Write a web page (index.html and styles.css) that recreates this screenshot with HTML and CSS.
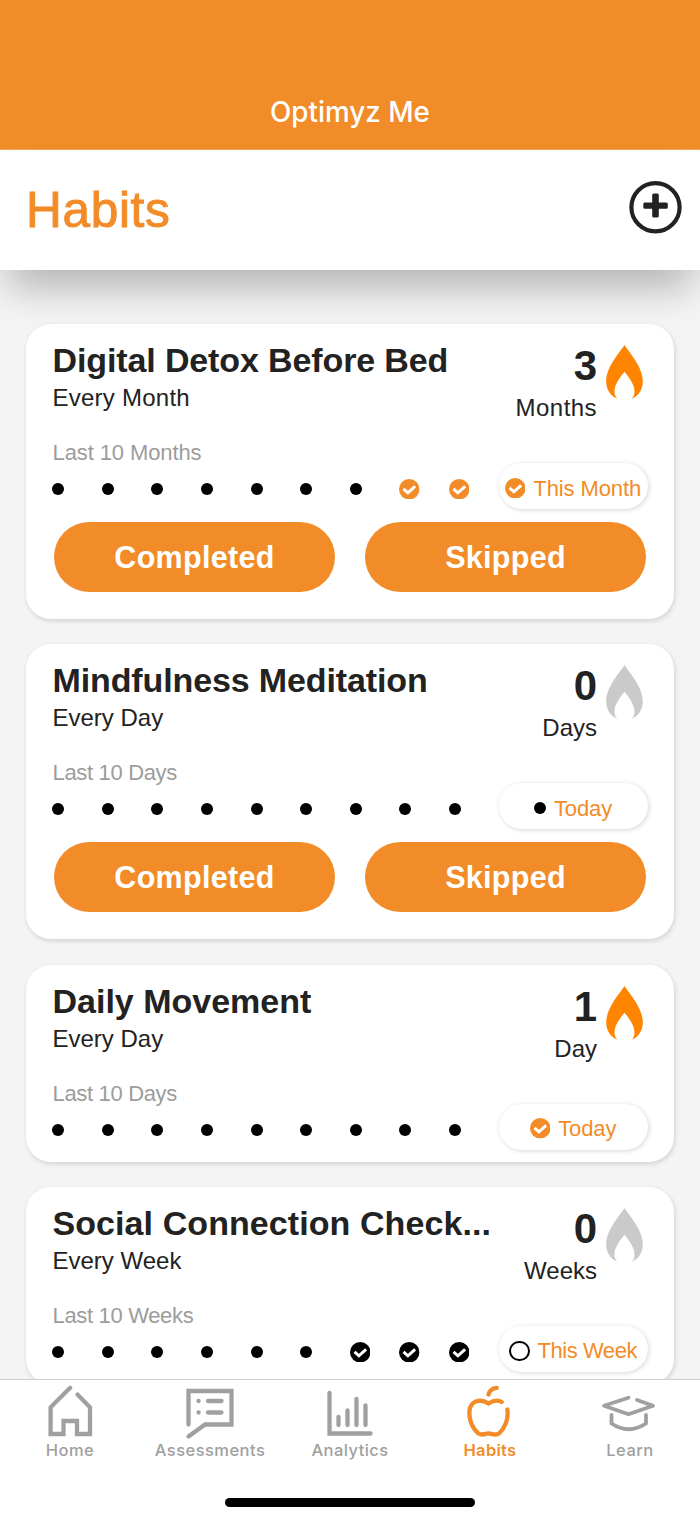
FILE: index.html
```
<!DOCTYPE html>
<html lang="en">
<head>
<meta charset="utf-8">
<title>Optimyz Me</title>
<link rel="stylesheet" href="styles.css">
</head>
<body>
<svg class="defs" width="0" height="0">
  <symbol id="flame" viewBox="0 0 37 54"><path fill="currentColor" d="M18.500 0C24 8.500 36.800 22 36.800 36.500C36.800 44.500 32.500 51 26 53.800C27.700 51.500 28.500 49.500 28.500 46.500C28.500 40 24 33.500 18.500 26.800C13 33.500 8.500 40 8.500 46.500C8.500 49.500 9.300 51.500 11.200 53.800C4.500 51 .2 44.500 .2 36.500C.2 22 13 8.500 18.500 0Z"/></symbol>
  <symbol id="check" viewBox="0 0 20 20"><circle cx="10" cy="10" r="10" fill="currentColor"/><path d="M4.400 9.700L8.700 13.500L15.700 7.200" fill="none" stroke="#fff" stroke-width="2.900"/></symbol>
</svg>
<header class="navbar"><span class="app-name">Optimyz Me</span></header>
<section class="heading">
  <h1 class="heading-text">Habits</h1>
  <svg class="add" viewBox="0 0 54 54"><circle cx="26.500" cy="27.300" r="24.100" fill="none" stroke="#222" stroke-width="4.200"/><path d="M24.700 13.500h3.600q1.500 0 1.500 1.500V22.500h7.500q1.500 0 1.500 1.500v3.200q0 1.500-1.500 1.500h-7.500v7.300q0 1.500-1.500 1.500h-3.600q-1.500 0-1.500-1.500v-7.300h-7.400q-1.500 0-1.500-1.500v-3.200q0-1.500 1.500-1.500h7.400v-7.500q0-1.500 1.500-1.500z" fill="#222"/></svg>
</section>
<main class="list">
  <article class="card">
    <div class="top">
      <div class="info"><h2 class="name n1">Digital Detox Before Bed</h2><p class="freq wide">Every Month</p></div>
      <div class="streak"><div class="count">3</div><div class="unit wide">Months</div></div>
      <svg class="flame lit"><use href="#flame"/></svg>
    </div>
    <p class="last l1">Last 10 Months</p>
    <div class="history">
      <div class="marks"><i class="dot"></i><i class="dot"></i><i class="dot"></i><i class="dot"></i><i class="dot"></i><i class="dot"></i><i class="dot"></i><svg class="check orange"><use href="#check"/></svg><svg class="check orange"><use href="#check"/></svg></div>
      <div class="pill"><svg class="check orange"><use href="#check"/></svg><span class="now">This Month</span></div>
    </div>
    <div class="actions"><button class="btn">Completed</button><button class="btn">Skipped</button></div>
  </article>
  <article class="card">
    <div class="top">
      <div class="info"><h2 class="name n2">Mindfulness Meditation</h2><p class="freq">Every Day</p></div>
      <div class="streak"><div class="count">0</div><div class="unit">Days</div></div>
      <svg class="flame"><use href="#flame"/></svg>
    </div>
    <p class="last">Last 10 Days</p>
    <div class="history">
      <div class="marks"><i class="dot"></i><i class="dot"></i><i class="dot"></i><i class="dot"></i><i class="dot"></i><i class="dot"></i><i class="dot"></i><i class="dot"></i><i class="dot"></i></div>
      <div class="pill"><i class="dot"></i><span class="now">Today</span></div>
    </div>
    <div class="actions"><button class="btn">Completed</button><button class="btn">Skipped</button></div>
  </article>
  <article class="card">
    <div class="top">
      <div class="info"><h2 class="name n3">Daily Movement</h2><p class="freq">Every Day</p></div>
      <div class="streak"><div class="count">1</div><div class="unit">Day</div></div>
      <svg class="flame lit"><use href="#flame"/></svg>
    </div>
    <p class="last">Last 10 Days</p>
    <div class="history">
      <div class="marks"><i class="dot"></i><i class="dot"></i><i class="dot"></i><i class="dot"></i><i class="dot"></i><i class="dot"></i><i class="dot"></i><i class="dot"></i><i class="dot"></i></div>
      <div class="pill"><svg class="check orange"><use href="#check"/></svg><span class="now">Today</span></div>
    </div>
  </article>
  <article class="card">
    <div class="top">
      <div class="info"><h2 class="name n4">Social Connection Check...</h2><p class="freq">Every Week</p></div>
      <div class="streak"><div class="count">0</div><div class="unit">Weeks</div></div>
      <svg class="flame"><use href="#flame"/></svg>
    </div>
    <p class="last">Last 10 Weeks</p>
    <div class="history">
      <div class="marks"><i class="dot"></i><i class="dot"></i><i class="dot"></i><i class="dot"></i><i class="dot"></i><i class="dot"></i><svg class="check"><use href="#check"/></svg><svg class="check"><use href="#check"/></svg><svg class="check"><use href="#check"/></svg></div>
      <div class="pill tight"><i class="ring"></i><span class="now">This Week</span></div>
    </div>
  </article>
</main>
<nav class="tabs">
  <a class="tab"><svg class="tab-icon" viewBox="0 0 60 54"><path d="M30.200 4.800L10.600 24.300V51H23.500V38H37V51H50V24.300L37.500 11.600"/></svg><span class="tab-label">Home</span></a>
  <a class="tab"><svg class="tab-icon" viewBox="0 0 60 54"><path d="M8.500 41.500V8H51.500V41.500H25L8.500 53.500M28 18H41.500M28 29.500H41.500M18.500 18h.1M18.500 29.500h.1"/></svg><span class="tab-label">Assessments</span></a>
  <a class="tab"><svg class="tab-icon" viewBox="0 0 60 54"><path d="M9.500 10V50.500H50.500M18.500 34V42M27.500 27.500V42M36.500 16V42M45.500 22.500V42"/></svg><span class="tab-label">Analytics</span></a>
  <a class="tab active"><svg class="tab-icon" viewBox="0 0 60 54"><path d="M28.500 11.500Q30 5.500 36.700 4.800M41.700 19C37.500 16.500 32.500 18 28.500 20.500C22.500 16.500 13 16 10 25C7.500 36 13 46 18.500 50.500C22.500 53 25.500 50.500 28.500 50.300C31.500 50.500 35 53 39 50.500C44.500 45.500 49 36 47.300 26.500"/></svg><span class="tab-label">Habits</span></a>
  <a class="tab"><svg class="tab-icon thin" viewBox="0 0 60 54"><path d="M28.500 14.700L4 22.800L28.500 31.200L53 22.800L37 17M11.500 32V40.500Q28.500 52 46 40.500V32"/></svg><span class="tab-label">Learn</span></a>
  <div class="home-bar"></div>
</nav>
</body>
</html>
```
FILE: styles.css
```
* { box-sizing: border-box; }
body {
  margin: 0; width: 700px; height: 1521px; overflow: hidden;
  display: flex; flex-direction: column;
  background: #f4f4f4; color: #222;
  font-family: "Liberation Sans", Arial, sans-serif;
}
h1, h2, p { margin: 0; }
.defs { display: none; }
.navbar {
  flex: 0 0 150px; background: #f28c28; border-bottom: 1px solid #eda85c;
  display: flex; justify-content: center; align-items: flex-end; padding-bottom: 19px;
}
.app-name { font: 550 27.800px/36px Inter, sans-serif; color: #fff; letter-spacing: 0; }
.heading {
  flex: 0 0 120px; background: #fff; position: relative; z-index: 1;
  display: flex; justify-content: space-between; align-items: flex-start;
  padding: 30px 17px 0 26px;
  box-shadow: 0 26px 38px -8px rgba(0,0,0,.26);
}
.heading-text { font-size: 49.500px; line-height: 60px; font-weight: 400; letter-spacing: .7px; color: #f28c28; -webkit-text-stroke: 1px #f28c28; }
.add { width: 54px; height: 54px; }
.list {
  flex: 1; min-height: 0; overflow: hidden;
  display: flex; flex-direction: column; gap: 25.300px; padding: 54px 26px 0;
}
.card {
  flex: none; background: #fff; border-radius: 25px; padding: 16px 26.500px 12px;
  box-shadow: 1px 2px 5px rgba(0,0,0,.14);
}
.top { display: flex; height: 78px; }
.info { flex: 1; }
.name { font-size: 34px; line-height: 40px; white-space: nowrap; }
.n1, .n2 { letter-spacing: -.12px; }
.n4 { letter-spacing: .08px; }
.freq { font-size: 24px; line-height: 35.500px; }
.wide { letter-spacing: .25px; }
.streak { text-align: right; padding-top: 1px; }
.count { font-size: 42px; font-weight: 700; line-height: 50px; height: 50px; }
.unit { font-size: 24px; line-height: 34px; }
.unit.wide { letter-spacing: .45px; }
.flame { width: 37px; height: 54px; margin: 5px 4.500px 0 9px; color: #cacaca; }
.flame.lit { color: #ff8500; }
.last { margin-top: 24px; font-size: 22px; line-height: 22px; height: 21px; color: #9c9c9c; letter-spacing: -.33px; }
.l1 { letter-spacing: -.1px; }
.history { display: flex; justify-content: space-between; height: 46px; }
.marks { display: grid; grid-template-columns: repeat(9, 49.550px); align-items: center; padding-top: 6px; margin-left: -.2px; flex: 0 0 446px; }
.dot { display: block; width: 12px; height: 12px; border-radius: 50%; background: #000; }
.ring { width: 20.500px; height: 20.500px; border-radius: 50%; border: 2px solid #000; }
.check { width: 20.500px; height: 20.500px; color: #000; }
.check.orange { color: #f28c28; }
.pill {
  flex: 0 0 149px; border-radius: 23px; background: #fff;
  box-shadow: 1px 1px 5px rgba(0,0,0,.16);
  display: flex; align-items: center; justify-content: center; gap: 8px; padding-top: 4px;
  color: #f28c28; font-size: 22px; line-height: 26px; white-space: nowrap; letter-spacing: -.1px;
}
.now { padding-top: 1px; }
.pill.tight { letter-spacing: -.45px; }
.actions { display: flex; gap: 30px; padding: 13px 1.500px 15px; }
.btn {
  flex: 1; height: 70px; border: 0; border-radius: 35px; background: #f28c28; color: #fff;
  font: 700 30.500px/36px "Liberation Sans", Arial, sans-serif; letter-spacing: .3px; padding: 0;
}
.tabs {
  flex: 0 0 142px; background: #fff; border-top: 1px solid #cfcfcf; position: relative; z-index: 2;
  display: grid; grid-template-columns: repeat(5, 1fr);
}
.tab { display: flex; flex-direction: column; align-items: center; color: #a0a0a0; padding-top: 3px; }
.tab.active { color: #f28c28; }
.tab-icon { width: 60px; height: 54px; margin-bottom: 3px; overflow: visible; fill: none; stroke: currentColor; stroke-width: 4.300; stroke-linecap: round; stroke-linejoin: miter; }
.tab-icon.thin { stroke-width: 3.800; stroke-linejoin: round; }
.tab-label { font: 500 16.500px/20px Inter, sans-serif; letter-spacing: .45px; }
.active .tab-label { font-weight: 600; letter-spacing: .3px; }
.home-bar { position: absolute; left: 225px; bottom: 14px; width: 250px; height: 9px; border-radius: 5px; background: #000; }
```
